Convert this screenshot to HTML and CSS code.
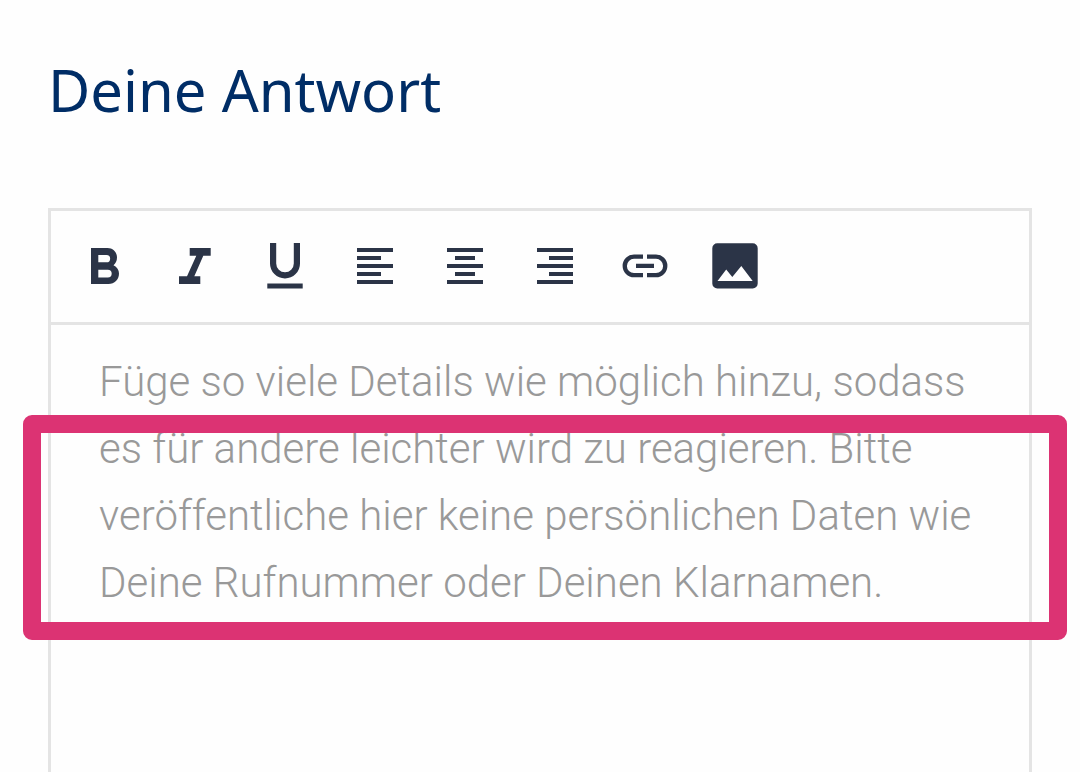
FILE: index.html
```html
<!doctype html>
<html lang="de">
<head>
    <title>Deine Antwort</title>
    <meta charset="utf-8">
    <meta name="viewport" content="width=device-width, initial-scale=1">
    <link rel="stylesheet" href="styles.css">
</head>
<body>
    <form class="answer">
        <h1 class="answer-title"><label for="answerText">Deine Antwort</label></h1>
        <div class="editor">
            <div class="toolbar">
                <button type="button" class="tool" aria-label="Fett">
                    <svg viewBox="0 0 60 60">
                        <path fill-rule="evenodd" d="M16 11H32.500C38 11 42 15 42 20.500C42 24 40.500 26.500 38.500 28.200C42 30 44 33 44 36.500C44 42.500 39.500 47 33.500 47H16ZM23.300 18V25.300H31.500A3.650 3.650 0 0 0 31.500 18ZM23.300 32.700V40.500H32.800A3.900 3.900 0 0 0 32.800 32.700Z"/>
                    </svg>
                </button>
                <button type="button" class="tool" aria-label="Kursiv">
                    <svg viewBox="0 0 60 60">
                        <path d="M24.700 11H45.700V18.700H38.300L29.300 39.200H35.300V47H14V39.200H22L31.300 18.700H24.700Z"/>
                    </svg>
                </button>
                <button type="button" class="tool" aria-label="Unterstrichen">
                    <svg viewBox="0 0 60 60">
                        <path d="M15 6H21.200V26.500A8.800 8.800 0 0 0 38.800 26.500V6H45V26.500A15 15 0 0 1 15 26.500ZM12.300 46.500H47.700V51.500H12.300Z"/>
                    </svg>
                </button>
                <button type="button" class="tool" aria-label="Linksbündig">
                    <svg viewBox="0 0 60 60">
                        <path d="M12 11H48V15H12ZM12 19H36V23H12ZM12 27H48V31H12ZM12 35H36V39H12ZM12 43H48V47H12Z"/>
                    </svg>
                </button>
                <button type="button" class="tool" aria-label="Zentriert">
                    <svg viewBox="0 0 60 60">
                        <path d="M12 11H48V15H12ZM20 19H40V23H20ZM12 27H48V31H12ZM20 35H40V39H20ZM12 43H48V47H12Z"/>
                    </svg>
                </button>
                <button type="button" class="tool" aria-label="Rechtsbündig">
                    <svg viewBox="0 0 60 60">
                        <path d="M12 11H48V15H12ZM24 19H48V23H24ZM12 27H48V31H12ZM24 35H48V39H24ZM12 43H48V47H12Z"/>
                    </svg>
                </button>
                <button type="button" class="tool" aria-label="Link einfügen">
                    <svg viewBox="0 0 60 60">
                        <path d="M28 17.500V21.800H19A7.100 7.100 0 0 0 19 36H28V40.300H19A11.400 11.400 0 0 1 19 17.500ZM32 17.500H41A11.400 11.400 0 0 1 41 40.300H32V36H41A7.100 7.100 0 0 0 41 21.800H32ZM21 26.800H39V31H21Z"/>
                    </svg>
                </button>
                <button type="button" class="tool" aria-label="Bild einfügen">
                    <svg viewBox="0 0 60 60">
                        <path fill-rule="evenodd" d="M12.300 6.300H47.700A5 5 0 0 1 52.700 11.300V46.500A5 5 0 0 1 47.700 51.500H12.300A5 5 0 0 1 7.300 46.500V11.300A5 5 0 0 1 12.300 6.300ZM12.500 44H47.700L36.300 29L27.300 40L21.200 32.500Z"/>
                    </svg>
                </button>
            </div>
            <div class="editor-body">
                <textarea id="answerText" class="editor-text" placeholder="Füge so viele Details wie möglich hinzu, sodass es für andere leichter wird zu reagieren. Bitte veröffentliche hier keine persönlichen Daten wie Deine Rufnummer oder Deinen Klarnamen."></textarea>
                <div class="marker"></div>
            </div>
        </div>
    </form>
</body>
</html>
```

FILE: styles.css
```css
* {
    box-sizing: border-box;
}

body {
    margin: 0;
    background-color: #fefefe;
}

.answer {
    display: flex;
    flex-direction: column;
    min-height: 100vh;
    padding: 50px 48px 0;
}

.answer-title {
    margin: 0 0 78px;
    font-family: "Noto Sans", sans-serif;
    font-size: 58px;
    font-weight: 400;
    line-height: 80px;
    color: #002d66;
}

.editor {
    display: flex;
    flex-direction: column;
    flex: 1;
    border: 3px solid #e4e4e4;
    border-bottom: 0;
}

.toolbar {
    display: flex;
    flex-wrap: wrap;
    gap: 30px;
    padding: 26px 24px 25px;
    border-bottom: 3px solid #e4e4e4;
}

.tool {
    width: 60px;
    height: 60px;
    padding: 0;
    border: 0;
    background: none;
    cursor: pointer;
}

.tool svg {
    display: block;
    fill: #2b3447;
}

.editor-body {
    display: flex;
    flex: 1;
    position: relative;
}

.editor-text {
    flex: 1;
    min-height: 320px;
    padding: 23px 48px;
    border: 0;
    outline: 0;
    resize: none;
    background: none;
    font-family: Roboto, sans-serif;
    font-size: 42px;
    font-weight: 300;
    line-height: 67px;
    color: #333;
}

.editor-text::placeholder {
    color: #999;
    opacity: 1;
}

/* hand-drawn frame around the privacy hint */
.marker {
    position: absolute;
    top: 90px;
    left: -28px;
    right: -38px;
    height: 225px;
    border: 18px solid #dc3373;
    border-radius: 9px;
    pointer-events: none;
}
```
